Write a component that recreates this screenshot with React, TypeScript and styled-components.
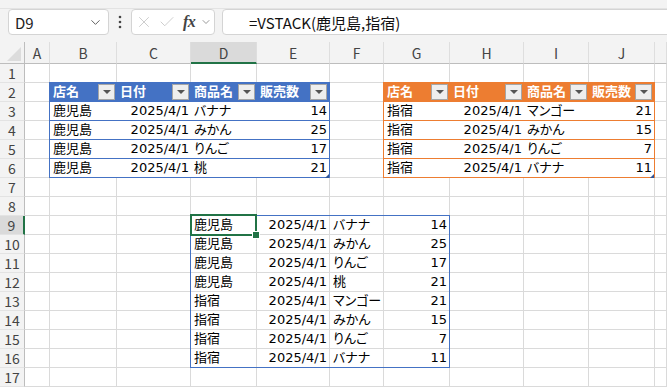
import React from 'react';
import styled, { createGlobalStyle } from 'styled-components';
import { ChevronDown, X, Check } from 'lucide-react';

const GRID = '#dadada';
const HEAD_LINE = '#bdbdbd';
const GREEN = '#217346';
const BLUE = '#4472c4';
const ORANGE = '#ed7d31';
const FONT = `"Noto Sans CJK JP", "Noto Sans", sans-serif`;
const CELL_FONT = `"DejaVu Sans", "Noto Sans CJK JP", sans-serif`;

const COLS = ['A', 'B', 'C', 'D', 'E', 'F', 'G', 'H', 'I', 'J', 'K'];
// pixel widths of A..J (K takes the rest)
const WIDTHS = [25, 67, 74, 66, 73, 54, 66, 74, 65, 66];
const ROWS = Array.from({ length: 17 }, (_, i) => i + 1);

type Row = [string, string, string, number];

const HEADERS = ['店名', '日付', '商品名', '販売数'];

const kagoshima: Row[] = [
  ['鹿児島', '2025/4/1', 'バナナ', 14],
  ['鹿児島', '2025/4/1', 'みかん', 25],
  ['鹿児島', '2025/4/1', 'りんご', 17],
  ['鹿児島', '2025/4/1', '桃', 21],
];

const ibusuki: Row[] = [
  ['指宿', '2025/4/1', 'マンゴー', 21],
  ['指宿', '2025/4/1', 'みかん', 15],
  ['指宿', '2025/4/1', 'りんご', 7],
  ['指宿', '2025/4/1', 'バナナ', 11],
];

const isRight = (i: number) => i === 1 || i === 3;

// spilled result of =VSTACK in D9:G16
const spill: Record<string, { text: string; right: boolean }> = {};
[...kagoshima, ...ibusuki].forEach((row, r) => {
  row.forEach((v, c) => {
    spill[`${COLS[3 + c]}${9 + r}`] = { text: String(v), right: isRight(c) };
  });
});

const GlobalStyle = createGlobalStyle`
  html, body { margin: 0; padding: 0; background: #fff; }
  body { font-family: ${FONT}; overflow: hidden; }
  * { box-sizing: border-box; }
`;

const Page = styled.div`
  width: 667px;
  height: 387px;
  display: flex;
  flex-direction: column;
  overflow: hidden;
  background: #f3f3f3;
`;

const TopStrip = styled.div`
  height: 9px;
  flex-shrink: 0;
  background: #f3f3f3;
  border-bottom: 1px solid #e3e3e3;
`;

const Toolbar = styled.div`
  height: 33px;
  flex-shrink: 0;
  display: flex;
  align-items: flex-start;
  padding-left: 8px;
`;

const Box = styled.div`
  height: 26px;
  flex-shrink: 0;
  background: #fff;
  border: 1px solid #d4d4d4;
  border-radius: 4px;
  display: flex;
  align-items: center;
`;

const NameBox = styled(Box)`
  width: 101px;
  padding: 0 5px 0 6px;
  justify-content: space-between;
  font-size: 15px;
  color: #222;
`;

const Dots = styled.div`
  width: 22px;
  height: 26px;
  flex-shrink: 0;
  display: flex;
  align-items: center;
  justify-content: center;
`;

const FxBox = styled(Box)`
  width: 84px;
  padding: 0 1px 0 3px;
  gap: 5px;
  color: #c4c4c4;
`;

const Fx = styled.span`
  font-family: "Liberation Serif", serif;
  font-style: italic;
  font-weight: bold;
  font-size: 16px;
  color: #444;
  margin-left: 2px;
  letter-spacing: -0.5px;
`;

const FormulaBox = styled(Box)`
  flex: 1 0 0;
  margin-left: 7px;
  margin-right: -6px;
  padding-left: 26px;
  font-size: 15px;
  color: #111;
`;

const Sheet = styled.div`
  flex: 1;
  display: grid;
  grid-template-columns: 25px ${WIDTHS.map((w) => `${w}px`).join(' ')} 1fr;
  grid-template-rows: 22px repeat(17, 19px);
  background: #fff;
  font-size: 13px;
  font-family: ${CELL_FONT};
  font-feature-settings: "palt";
`;

const Placed = styled.div<{ $c: number; $r: number }>`
  grid-column: ${(p) => p.$c};
  grid-row: ${(p) => p.$r};
`;

const Corner = styled(Placed)`
  background: #f3f3f3;
  border-right: 1px solid ${HEAD_LINE};
  border-bottom: 1px solid ${HEAD_LINE};
  display: flex;
  align-items: flex-end;
  justify-content: flex-end;
  padding: 0 3px 2px 0;
`;

const ColHeader = styled(Placed)<{ $sel?: boolean }>`
  background: ${(p) => (p.$sel ? '#dadada' : '#f3f3f3')};
  border-right: 1px solid #dedede;
  border-bottom: ${(p) => (p.$sel ? `2px solid ${GREEN}` : `1px solid ${HEAD_LINE}`)};
  display: flex;
  align-items: center;
  justify-content: center;
  color: #444;
  font-family: ${FONT};
  font-size: 14px;
  padding-top: ${(p) => (p.$sel ? '1px' : '0')};
`;

const RowHeader = styled(Placed)<{ $sel?: boolean }>`
  background: ${(p) => (p.$sel ? '#dadada' : '#f3f3f3')};
  border-right: ${(p) => (p.$sel ? `2px solid ${GREEN}` : `1px solid ${HEAD_LINE}`)};
  border-bottom: 1px solid #e3e3e3;
  display: flex;
  align-items: center;
  justify-content: center;
  color: #444;
  font-family: ${FONT};
  font-size: 14px;
  line-height: 18px;
`;

const Cell = styled(Placed)<{ $right?: boolean }>`
  border-right: 1px solid ${GRID};
  border-bottom: 1px solid ${GRID};
  padding: 0 ${(p) => (p.$right ? '2px' : '0')} 0 ${(p) => (p.$right ? '0' : '3px')};
  line-height: 18px;
  color: #000;
  text-align: ${(p) => (p.$right ? 'right' : 'left')};
  white-space: nowrap;
  overflow: hidden;
`;

const TableBox = styled.div<{ $col: number; $color: string; $widths: number[] }>`
  grid-column: ${(p) => `${p.$col} / ${p.$col + 4}`};
  grid-row: 3 / 8;
  margin: -1px 0 0 -1px;
  position: relative;
  background: #fff;
  border-left: 1px solid ${(p) => p.$color};
  border-right: 1px solid ${(p) => p.$color};
  display: grid;
  grid-template-columns: ${(p) => p.$widths.map((w) => `${w}px`).join(' ')};
  grid-template-rows: 20px repeat(4, 19px);
  z-index: 1;
`;

const HeadCell = styled.div<{ $color: string }>`
  background: ${(p) => p.$color};
  color: #fff;
  font-weight: bold;
  display: flex;
  align-items: center;
  justify-content: space-between;
  padding: 0 2px 0 3px;
  line-height: 18px;
  white-space: nowrap;
`;

const FilterButton = styled.div`
  width: 17px;
  height: 16px;
  flex-shrink: 0;
  background: #eeeeee;
  border: 1px solid #a6a6a6;
  display: flex;
  align-items: center;
  justify-content: center;
  &::after {
    content: '';
    border-left: 4px solid transparent;
    border-right: 4px solid transparent;
    border-top: 4px solid #555;
  }
`;

const BodyCell = styled.div<{ $color: string; $right?: boolean }>`
  border-bottom: 1px solid ${(p) => p.$color};
  padding: 0 ${(p) => (p.$right ? '2px' : '0')} 0 ${(p) => (p.$right ? '0' : '3px')};
  text-align: ${(p) => (p.$right ? 'right' : 'left')};
  line-height: 18px;
  white-space: nowrap;
`;

const ResizeHandle = styled.div`
  position: absolute;
  right: 0;
  bottom: 0;
  width: 0;
  height: 0;
  border-left: 4px solid transparent;
  border-bottom: 4px solid #2f5597;
`;

const SpillFrame = styled.div`
  grid-column: 5 / 9;
  grid-row: 10 / 18;
  margin: -1px 0 0 -1px;
  border: 1px solid ${BLUE};
  pointer-events: none;
  z-index: 1;
`;

const ActiveFrame = styled.div`
  grid-column: 5;
  grid-row: 10;
  margin: -2px 0 -1px -1px;
  border: 2px solid ${GREEN};
  position: relative;
  pointer-events: none;
  z-index: 2;
`;

const FillHandle = styled.div`
  position: absolute;
  right: -4px;
  bottom: -4px;
  width: 6px;
  height: 6px;
  background: ${GREEN};
  outline: 1px solid #fff;
`;

function DataTable({ col, color, rows }: { col: number; color: string; rows: Row[] }) {
  const widths = WIDTHS.slice(col - 2, col + 2);
  widths[3] -= 1;
  return (
    <TableBox $col={col} $color={color} $widths={widths}>
      {HEADERS.map((h) => (
        <HeadCell key={h} $color={color}>
          <span>{h}</span>
          <FilterButton />
        </HeadCell>
      ))}
      {rows.map((row, r) =>
        row.map((v, c) => (
          <BodyCell key={`${r}-${c}`} $color={color} $right={isRight(c)}>
            {v}
          </BodyCell>
        ))
      )}
      <ResizeHandle />
    </TableBox>
  );
}

export default function App() {
  return (
    <Page>
      <GlobalStyle />
      <TopStrip />
      <Toolbar>
        <NameBox>
          <span>D9</span>
          <ChevronDown size={15} strokeWidth={1.5} color="#555" />
        </NameBox>
        <Dots>
          <svg width="4" height="14" viewBox="0 0 4 14">
            <circle cx="2" cy="2" r="1.3" fill="#444" />
            <circle cx="2" cy="7" r="1.3" fill="#444" />
            <circle cx="2" cy="12" r="1.3" fill="#444" />
          </svg>
        </Dots>
        <FxBox>
          <X size={18} strokeWidth={1.1} />
          <Check size={18} strokeWidth={1.1} />
          <Fx>fx</Fx>
          <ChevronDown size={12} strokeWidth={1.5} color="#777" />
        </FxBox>
        <FormulaBox>=VSTACK(鹿児島,指宿)</FormulaBox>
      </Toolbar>
      <Sheet>
        <Corner $c={1} $r={1}>
          <svg width="14" height="14" viewBox="0 0 14 14">
            <polygon points="14,0 14,14 0,14" fill="#dcdcdc" />
          </svg>
        </Corner>
        {COLS.map((c, i) => (
          <ColHeader key={c} $c={i + 2} $r={1} $sel={c === 'D'}>
            {c === 'K' ? '' : c}
          </ColHeader>
        ))}
        {ROWS.map((r) => (
          <React.Fragment key={r}>
            <RowHeader $c={1} $r={r + 1} $sel={r === 9}>
              {r}
            </RowHeader>
            {COLS.map((c, i) => {
              const v = spill[`${c}${r}`];
              return (
                <Cell key={c} $c={i + 2} $r={r + 1} $right={v?.right}>
                  {v?.text}
                </Cell>
              );
            })}
          </React.Fragment>
        ))}
        <DataTable col={3} color={BLUE} rows={kagoshima} />
        <DataTable col={8} color={ORANGE} rows={ibusuki} />
        <SpillFrame />
        <ActiveFrame>
          <FillHandle />
        </ActiveFrame>
      </Sheet>
    </Page>
  );
}
